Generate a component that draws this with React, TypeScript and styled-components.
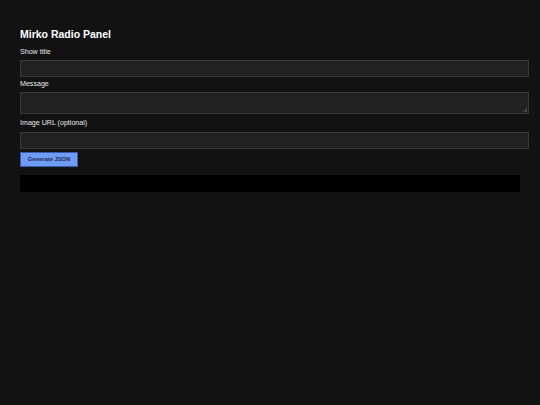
import React from "react";
import styled, { createGlobalStyle } from "styled-components";

const Global = createGlobalStyle`
  html, body { margin: 0; padding: 0; background: #121212; }
  body { font-family: "Liberation Sans", Arial, sans-serif; color: #f0f0f0; }
  * { box-sizing: border-box; }
`;

const Page = styled.div`
  min-height: 405px;
  padding: 28px 11px 0 20px;
  display: flex;
  flex-direction: column;
  align-items: flex-start;
`;

const Title = styled.h2`
  margin: 0 0 8px 0;
  font-size: 10.5px;
  line-height: 12px;
  font-weight: 700;
  color: #ffffff;
`;

const Label = styled.label<{ $top?: number; $bottom?: number }>`
  display: block;
  font-size: 7.1px;
  line-height: 8px;
  color: #e8e8e8;
  margin-top: ${(p) => p.$top ?? 0}px;
  margin-bottom: ${(p) => p.$bottom ?? 4}px;
`;

const fieldCss = `
  display: block;
  width: 100%;
  background: #222222;
  border: 1px solid #383838;
  color: #eee;
  font-family: "Liberation Sans", Arial, sans-serif;
  font-size: 7px;
  padding: 3px 5px;
  margin: 0;
  outline: none;
  border-radius: 0;
`;

const Input = styled.input`
  ${fieldCss}
  height: 16.7px;
`;

const TextArea = styled.textarea`
  ${fieldCss}
  height: 22.6px;
  resize: vertical;
  &::-webkit-resizer {
    background-color: transparent;
    background-image: linear-gradient(135deg, transparent 45%, #555 45%, #555 60%, transparent 60%, transparent 72%, #555 72%, #555 88%, transparent 88%);
    background-size: 4px 4px;
    background-position: right 1px bottom 1px;
    background-repeat: no-repeat;
  }
`;

const Button = styled.button`
  margin-top: 3.3px;
  width: 58px;
  height: 15px;
  background: #6e9cf5;
  border: 1px solid #3a5aa8;
  color: #1b2750;
  font-family: "Liberation Sans", Arial, sans-serif;
  font-size: 5.8px;
  font-weight: 700;
  padding: 0;
  cursor: pointer;
`;

const Output = styled.pre`
  margin: 8px 0 0 0;
  width: 500px;
  height: 17px;
  background: #000000;
`;

export default function App() {
  return (
    <>
      <Global />
      <Page>
        <Title>Mirko Radio Panel</Title>
        <Label htmlFor="title">Show title</Label>
        <Input id="title" type="text" />
        <Label htmlFor="msg" $top={3}>Message</Label>
        <TextArea id="msg" />
        <Label htmlFor="img" $top={5} $bottom={4.7}>Image URL (optional)</Label>
        <Input id="img" type="text" />
        <Button type="button">Generate JSON</Button>
        <Output />
      </Page>
    </>
  );
}
